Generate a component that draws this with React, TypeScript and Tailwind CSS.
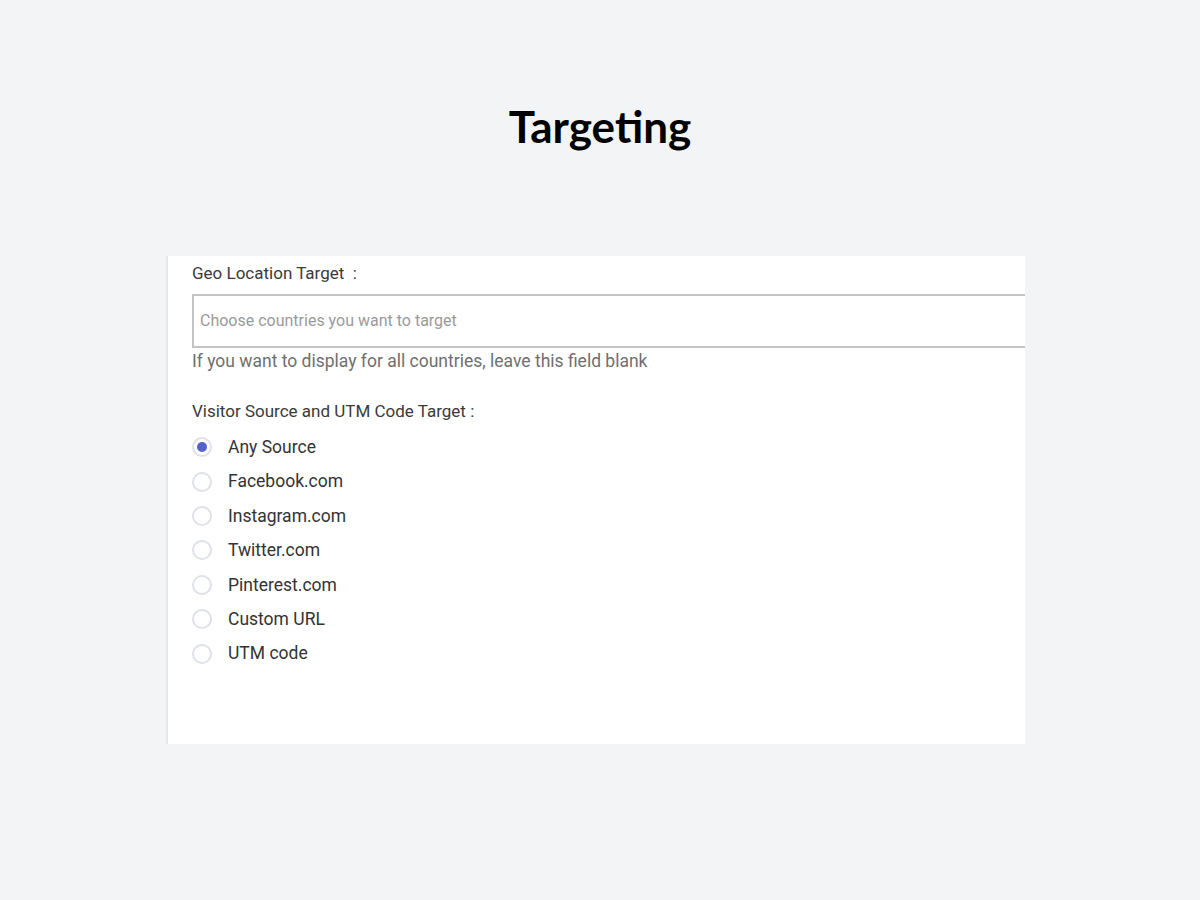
const sources = [
  "Any Source",
  "Facebook.com",
  "Instagram.com",
  "Twitter.com",
  "Pinterest.com",
  "Custom URL",
  "UTM code",
];

function Radio({ checked }: { checked: boolean }) {
  return (
    <span className="flex h-[20px] w-[20px] shrink-0 items-center justify-center rounded-full border-2 border-[#dfe1e8] bg-white">
      {checked && <span className="h-[10px] w-[10px] rounded-full bg-[#5563c9]" />}
    </span>
  );
}

export default function App() {
  return (
    <div className="min-h-[900px] w-full bg-[#f3f4f6] pt-[96px]">
      <h1 className="text-center font-['Lato',sans-serif] text-[44px] font-bold leading-[60px] text-black">
        Targeting
      </h1>

      <div className="ml-[166px] mt-[100px] h-[488px] w-[859px] overflow-hidden border-l-2 border-[#e6e7ea] bg-white pl-[24px] pt-[5px] font-['Roboto',sans-serif]">
        <div className="text-[17px] leading-[24px] text-[#3a3a3a]">
          Geo Location Target &nbsp;:
        </div>
        <div className="mt-[9px] flex h-[54px] w-[900px] items-center border-2 border-[#c4c4c4] px-[6px] text-[16px] text-[#9a9a9a]">
          Choose countries you want to target
        </div>
        <div className="mt-[1px] text-[17.5px] leading-[24px] text-[#6f6f6f]">
          If you want to display for all countries, leave this field blank
        </div>

        <div className="mt-[26px] text-[17px] leading-[24px] text-[#3a3a3a]">
          Visitor Source and UTM Code Target :
        </div>
        <div className="mt-[13px] flex flex-col gap-[12px]">
          {sources.map((s, i) => (
            <label key={s} className="flex h-[22.4px] items-center gap-[16px]">
              <Radio checked={i === 0} />
              <span className="text-[17.5px] text-[#333]">{s}</span>
            </label>
          ))}
        </div>
      </div>
    </div>
  );
}
